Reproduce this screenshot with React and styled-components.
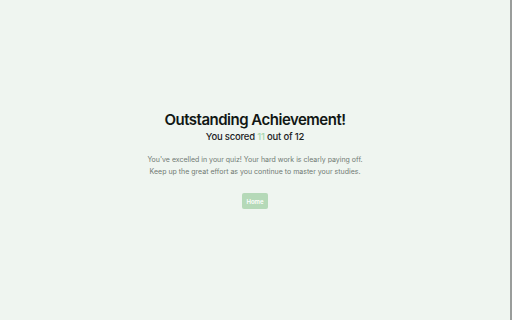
import React from 'react';
import styled, { createGlobalStyle } from 'styled-components';

const GlobalStyle = createGlobalStyle`
  html, body {
    margin: 0;
    padding: 0;
    background: #eff5f0;
  }
  body {
    font-family: Inter, "Noto Sans", sans-serif;
  }
`;

const Page = styled.div`
  box-sizing: border-box;
  width: 512px;
  height: 320px;
  border-right: 2px solid #9a9d9b;
  display: flex;
  align-items: center;
  justify-content: center;
`;

const Card = styled.div`
  display: flex;
  flex-direction: column;
  align-items: center;
  text-align: center;
  padding-bottom: 0.5px;
`;

const Title = styled.h1`
  margin: 0;
  font-size: 15px;
  line-height: 18px;
  font-weight: 600;
  color: #111714;
  letter-spacing: -0.5px;
`;

const Score = styled.h2`
  margin: 1px 0 0 0;
  font-size: 9.5px;
  line-height: 14px;
  font-weight: 500;
  color: #1d231f;
  letter-spacing: -0.2px;
`;

const Highlight = styled.span`
  color: #a8d5ad;
`;

const Message = styled.p`
  margin: 10px 0 0 0;
  font-size: 7px;
  line-height: 12px;
  color: #707a73;
`;

const HomeButton = styled.button`
  margin-top: 15.5px;
  height: 16px;
  padding: 0 4.5px;
  border: none;
  border-radius: 2px;
  background: #b5d9b8;
  color: #ffffff;
  font-family: Inter, sans-serif;
  font-size: 6px;
  font-weight: 600;
`;

export default function App() {
  return (
    <>
      <GlobalStyle />
      <Page>
        <Card>
          <Title>Outstanding Achievement!</Title>
          <Score>
            You scored <Highlight>11</Highlight> out of 12
          </Score>
          <Message>
            You've excelled in your quiz! Your hard work is clearly paying off.
            <br />
            Keep up the great effort as you continue to master your studies.
          </Message>
          <HomeButton>Home</HomeButton>
        </Card>
      </Page>
    </>
  );
}
